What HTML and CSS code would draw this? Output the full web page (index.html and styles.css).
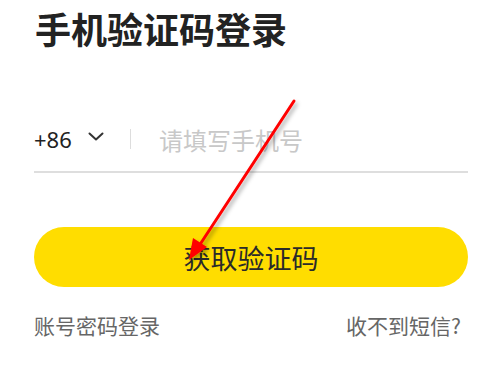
FILE: index.html
```html
<!DOCTYPE html>
<html lang="zh">
<head>
<meta charset="utf-8">
<link rel="stylesheet" href="styles.css">
</head>
<body>
<main class="page">
  <h1 class="title">手机验证码登录</h1>
  <div class="phone-row">
    <div class="country">
      <span class="code">+86</span>
      <svg class="chevron" width="16" height="10" viewBox="0 0 16 10"><path d="M1.5 1.5 L8 7.5 L14.5 1.5" fill="none" stroke="#333" stroke-width="2" stroke-linecap="round" stroke-linejoin="round"/></svg>
    </div>
    <span class="divider"></span>
    <span class="placeholder">请填写手机号</span>
  </div>
  <button class="submit">获取验证码</button>
  <div class="links">
    <span class="link">账号密码登录</span>
    <span class="link">收不到短信?</span>
  </div>
</main>
<svg class="annotation" width="491" height="374" viewBox="0 0 491 374">
  <defs>
    <filter id="sh" x="-20%" y="-20%" width="140%" height="140%">
      <feDropShadow dx="2" dy="3" stdDeviation="2" flood-color="#000" flood-opacity="0.35"/>
    </filter>
  </defs>
  <g filter="url(#sh)">
    <line x1="294" y1="101" x2="199" y2="246" stroke="#ff0000" stroke-width="3" stroke-linecap="round"/>
    <polygon points="189,260 193,238 207,247" fill="#ff0000"/>
  </g>
</svg>
</body>
</html>
```

FILE: styles.css
```css
html, body {
  margin: 0;
  padding: 0;
  background: #fff;
}
body {
  width: 491px;
  height: 374px;
  overflow: hidden;
  position: relative;
  font-family: "Noto Sans CJK SC", "Noto Sans", sans-serif;
}
.page {
  padding: 3px 23px 0 34px;
  display: flex;
  flex-direction: column;
}
.title {
  margin: 0 0 0 1px;
  font-size: 36px;
  line-height: 50px;
  font-weight: 700;
  color: #222;
}
.phone-row {
  margin-top: 66px;
  height: 54px;
  display: flex;
  align-items: center;
  border-bottom: 2px solid #dedede;
  box-sizing: border-box;
  padding-bottom: 12px;
}
.country {
  display: flex;
  align-items: center;
  width: 96px;
}
.code {
  font-family: "Noto Sans", sans-serif;
  font-size: 22px;
  color: #222;
}
.chevron {
  margin-left: 16px;
  margin-top: -4px;
}
.divider {
  width: 1px;
  height: 20px;
  background: #ddd;
}
.placeholder {
  margin-left: 28px;
  font-size: 24px;
  color: #c8c8c8;
}
.submit {
  margin-top: 54px;
  height: 60px;
  border: none;
  border-radius: 30px;
  background: #ffdd00;
  color: #2a2a2a;
  font-family: "Noto Sans CJK SC", sans-serif;
  font-size: 27px;
  padding: 0;
  cursor: pointer;
}
.links {
  margin-top: 24px;
  display: flex;
  justify-content: space-between;
  padding-right: 7px;
}
.link {
  font-size: 21px;
  color: #666;
  line-height: 28px;
}
.annotation {
  position: absolute;
  left: 0;
  top: 0;
  pointer-events: none;
}
```
